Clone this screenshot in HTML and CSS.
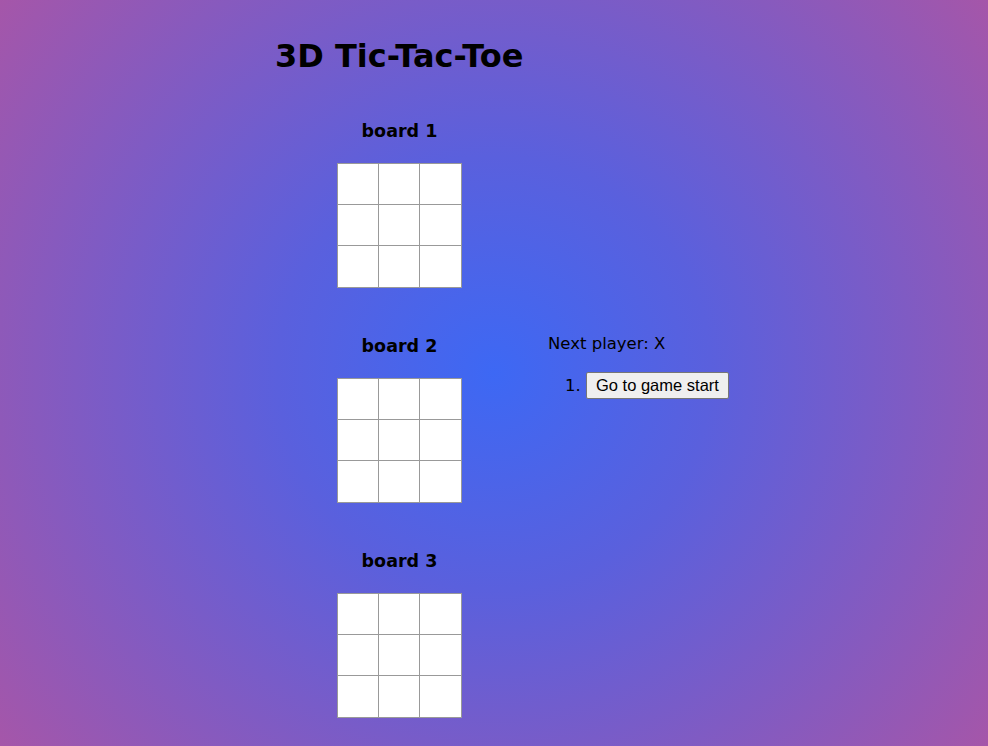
FILE: index.html
```html
<!DOCTYPE html>
<html lang="en">
<head>
<meta charset="utf-8">
<title>3D Tic-Tac-Toe</title>
<link rel="stylesheet" href="styles.css">
</head>
<body>
<div class="page">
  <h1 class="title">3D Tic-Tac-Toe</h1>
  <div class="game">
    <div class="game-board">
      <div class="board-block">
        <div class="board-label">board 1</div>
        <div class="board">
          <button class="square"></button><button class="square"></button><button class="square"></button>
          <button class="square"></button><button class="square"></button><button class="square"></button>
          <button class="square"></button><button class="square"></button><button class="square"></button>
        </div>
      </div>
      <div class="board-block">
        <div class="board-label">board 2</div>
        <div class="board">
          <button class="square"></button><button class="square"></button><button class="square"></button>
          <button class="square"></button><button class="square"></button><button class="square"></button>
          <button class="square"></button><button class="square"></button><button class="square"></button>
        </div>
      </div>
      <div class="board-block">
        <div class="board-label">board 3</div>
        <div class="board">
          <button class="square"></button><button class="square"></button><button class="square"></button>
          <button class="square"></button><button class="square"></button><button class="square"></button>
          <button class="square"></button><button class="square"></button><button class="square"></button>
        </div>
      </div>
    </div>
    <div class="game-info">
      <div class="status">Next player: X</div>
      <ol class="moves">
        <li><button class="move-btn">Go to game start</button></li>
      </ol>
    </div>
  </div>
</div>
</body>
</html>
```

FILE: styles.css
```css
html, body {
  margin: 0;
  padding: 0;
}
body {
  min-height: 100vh;
  background: radial-gradient(circle farthest-corner at 494px 373px, #3d68f4 0%, #5a60dd 35%, #a556a9 100%);
  font-family: "DejaVu Sans", sans-serif;
  color: #000;
}
.page {
  padding: 38px 0 0 275px;
}
.title {
  margin: 0;
  font-size: 32px;
  line-height: 36px;
  font-weight: bold;
}
.game {
  display: flex;
  align-items: flex-start;
  margin-top: 44px;
  padding-left: 62px;
}
.game-board {
  display: flex;
  flex-direction: column;
  gap: 45px;
  width: 125px;
}
.board-block {
  display: flex;
  flex-direction: column;
  align-items: center;
}
.board-label {
  font-size: 17.5px;
  font-weight: bold;
  line-height: 26px;
  margin-bottom: 19px;
}
.board {
  display: grid;
  grid-template-columns: 41px 41px 42px;
  grid-template-rows: 41px 41px 42px;
  border-left: 1px solid #999;
  border-top: 1px solid #999;
}
.square {
  box-sizing: border-box;
  width: 100%;
  height: 100%;
  margin: 0;
  padding: 0;
  background: #fff;
  border: 0;
  border-right: 1px solid #999;
  border-bottom: 1px solid #999;
}
.game-info {
  margin-left: 86px;
  margin-top: 215px;
}
.status {
  font-size: 16.5px;
  line-height: 22px;
}
.moves {
  margin: 17px 0 0 0;
  padding-left: 38px;
  font-size: 16.5px;
}
.move-btn {
  font-family: "Liberation Sans", Arial, sans-serif;
  font-size: 16.5px;
  padding: 3px 9px;
  background: #efefef;
  border: 1px solid #767676;
  border-radius: 2px;
  color: #000;
}
```
